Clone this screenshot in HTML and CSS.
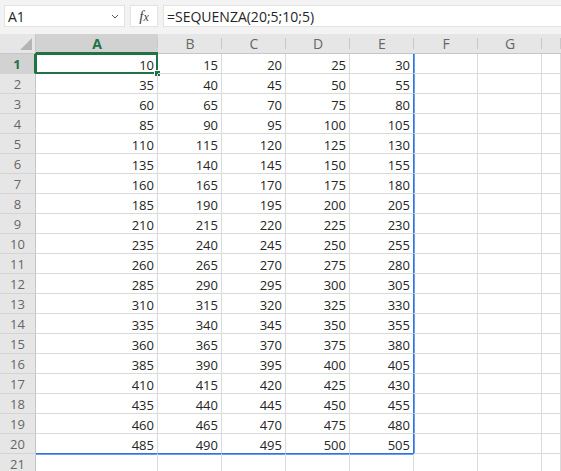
FILE: index.html
```html
<!DOCTYPE html>
<html lang="it">
<head>
    <meta charset="UTF-8">
    <title>Foglio1</title>
    <link rel="stylesheet" href="styles.css">
</head>
<body>
    <!-- Barra della formula -->
    <div class="formula-bar">
        <div class="name-box">
            <span>A1</span>
            <svg class="chevron" width="8" height="5" viewBox="0 0 8 5"><polyline points="1,1 4,4 7,1" fill="none" stroke="#555" stroke-width="1"/></svg>
        </div>
        <div class="fx-box"><i>f</i><i class="sub">x</i></div>
        <div class="formula">=SEQUENZA(20;5;10;5)</div>
    </div>

    <!-- Griglia -->
    <div class="sheet">
        <div class="corner"></div>
        <div class="col-head active">A</div>
        <div class="col-head">B</div>
        <div class="col-head">C</div>
        <div class="col-head">D</div>
        <div class="col-head">E</div>
        <div class="col-head">F</div>
        <div class="col-head">G</div>
        <div class="col-head"></div>

        <div class="row-head active">1</div>
        <div class="cell selected">10</div><div class="cell">15</div><div class="cell">20</div><div class="cell">25</div><div class="cell spill-r">30</div><div class="cell"></div><div class="cell"></div><div class="cell"></div>

        <div class="row-head">2</div>
        <div class="cell">35</div><div class="cell">40</div><div class="cell">45</div><div class="cell">50</div><div class="cell spill-r">55</div><div class="cell"></div><div class="cell"></div><div class="cell"></div>

        <div class="row-head">3</div>
        <div class="cell">60</div><div class="cell">65</div><div class="cell">70</div><div class="cell">75</div><div class="cell spill-r">80</div><div class="cell"></div><div class="cell"></div><div class="cell"></div>

        <div class="row-head">4</div>
        <div class="cell">85</div><div class="cell">90</div><div class="cell">95</div><div class="cell">100</div><div class="cell spill-r">105</div><div class="cell"></div><div class="cell"></div><div class="cell"></div>

        <div class="row-head">5</div>
        <div class="cell">110</div><div class="cell">115</div><div class="cell">120</div><div class="cell">125</div><div class="cell spill-r">130</div><div class="cell"></div><div class="cell"></div><div class="cell"></div>

        <div class="row-head">6</div>
        <div class="cell">135</div><div class="cell">140</div><div class="cell">145</div><div class="cell">150</div><div class="cell spill-r">155</div><div class="cell"></div><div class="cell"></div><div class="cell"></div>

        <div class="row-head">7</div>
        <div class="cell">160</div><div class="cell">165</div><div class="cell">170</div><div class="cell">175</div><div class="cell spill-r">180</div><div class="cell"></div><div class="cell"></div><div class="cell"></div>

        <div class="row-head">8</div>
        <div class="cell">185</div><div class="cell">190</div><div class="cell">195</div><div class="cell">200</div><div class="cell spill-r">205</div><div class="cell"></div><div class="cell"></div><div class="cell"></div>

        <div class="row-head">9</div>
        <div class="cell">210</div><div class="cell">215</div><div class="cell">220</div><div class="cell">225</div><div class="cell spill-r">230</div><div class="cell"></div><div class="cell"></div><div class="cell"></div>

        <div class="row-head">10</div>
        <div class="cell">235</div><div class="cell">240</div><div class="cell">245</div><div class="cell">250</div><div class="cell spill-r">255</div><div class="cell"></div><div class="cell"></div><div class="cell"></div>

        <div class="row-head">11</div>
        <div class="cell">260</div><div class="cell">265</div><div class="cell">270</div><div class="cell">275</div><div class="cell spill-r">280</div><div class="cell"></div><div class="cell"></div><div class="cell"></div>

        <div class="row-head">12</div>
        <div class="cell">285</div><div class="cell">290</div><div class="cell">295</div><div class="cell">300</div><div class="cell spill-r">305</div><div class="cell"></div><div class="cell"></div><div class="cell"></div>

        <div class="row-head">13</div>
        <div class="cell">310</div><div class="cell">315</div><div class="cell">320</div><div class="cell">325</div><div class="cell spill-r">330</div><div class="cell"></div><div class="cell"></div><div class="cell"></div>

        <div class="row-head">14</div>
        <div class="cell">335</div><div class="cell">340</div><div class="cell">345</div><div class="cell">350</div><div class="cell spill-r">355</div><div class="cell"></div><div class="cell"></div><div class="cell"></div>

        <div class="row-head">15</div>
        <div class="cell">360</div><div class="cell">365</div><div class="cell">370</div><div class="cell">375</div><div class="cell spill-r">380</div><div class="cell"></div><div class="cell"></div><div class="cell"></div>

        <div class="row-head">16</div>
        <div class="cell">385</div><div class="cell">390</div><div class="cell">395</div><div class="cell">400</div><div class="cell spill-r">405</div><div class="cell"></div><div class="cell"></div><div class="cell"></div>

        <div class="row-head">17</div>
        <div class="cell">410</div><div class="cell">415</div><div class="cell">420</div><div class="cell">425</div><div class="cell spill-r">430</div><div class="cell"></div><div class="cell"></div><div class="cell"></div>

        <div class="row-head">18</div>
        <div class="cell">435</div><div class="cell">440</div><div class="cell">445</div><div class="cell">450</div><div class="cell spill-r">455</div><div class="cell"></div><div class="cell"></div><div class="cell"></div>

        <div class="row-head">19</div>
        <div class="cell">460</div><div class="cell">465</div><div class="cell">470</div><div class="cell">475</div><div class="cell spill-r">480</div><div class="cell"></div><div class="cell"></div><div class="cell"></div>

        <div class="row-head">20</div>
        <div class="cell spill-b">485</div><div class="cell spill-b">490</div><div class="cell spill-b">495</div><div class="cell spill-b">500</div><div class="cell spill-b spill-r">505</div><div class="cell"></div><div class="cell"></div><div class="cell"></div>

        <div class="row-head">21</div>
        <div class="cell"></div><div class="cell"></div><div class="cell"></div><div class="cell"></div><div class="cell"></div><div class="cell"></div><div class="cell"></div><div class="cell"></div>
    </div>
</body>
</html>
```

FILE: styles.css
```css
body {
    margin: 0;
    background: #fff;
    font-family: "Open Sans", "Noto Sans", sans-serif;
    font-size: 13px;
    color: #262626;
    overflow: hidden;
}

/* barra formula */
.formula-bar {
    display: flex;
    gap: 5px;
    height: 34px;
    padding: 5px 0 0 4px;
    box-sizing: border-box;
    background: #f3f3f3;
}
.name-box, .fx-box, .formula {
    height: 22px;
    background: #fff;
    border: 1px solid #e3e3e3;
    display: flex;
    align-items: center;
    box-sizing: border-box;
}
.name-box {
    width: 121px;
    padding: 0 5px 0 3px;
    justify-content: space-between;
    font-size: 14px;
}
.fx-box {
    width: 28px;
    justify-content: center;
    font-family: "Liberation Serif", serif;
    font-size: 15px;
    color: #444;
}
.fx-box .sub {
    font-size: 12px;
    margin-top: 2px;
}
.formula {
    flex: 1;
    padding-left: 3px;
    border-right: none;
    font-size: 14px;
}

/* griglia */
.sheet {
    display: grid;
    grid-template-columns: 36px 122px repeat(6, 64px) 1fr;
    grid-auto-rows: 20px;
}
.corner {
    background: #e6e6e6;
    position: relative;
    border-bottom: 1px solid #c6c6c6;
    border-right: 1px solid #c6c6c6;
}
.corner::after {
    content: "";
    position: absolute;
    right: 3px;
    bottom: 3px;
    border-style: solid;
    border-width: 0 0 12px 12px;
    border-color: transparent transparent #b4b4b4 transparent;
}
.col-head {
    background: #e6e6e6;
    color: #666;
    font-size: 14px;
    text-align: center;
    line-height: 20px;
    border-bottom: 1px solid #c6c6c6;
    position: relative;
}
.col-head::after {
    content: "";
    position: absolute;
    right: 0;
    top: 4px;
    bottom: 4px;
    border-right: 1px solid #c8c8c8;
}
.col-head.active {
    background: #d2d2d2;
    color: #217346;
    font-weight: bold;
    border-bottom: 2px solid #217346;
}
.row-head {
    background: #e6e6e6;
    color: #666;
    font-size: 13px;
    text-align: center;
    line-height: 20px;
    border-right: 1px solid #c6c6c6;
    border-bottom: 1px solid #d4d4d4;
    box-sizing: border-box;
}
.row-head.active {
    background: #d2d2d2;
    color: #217346;
    font-weight: bold;
    border-right: 2px solid #217346;
}
.cell {
    border-right: 1px solid #dadada;
    border-bottom: 1px solid #dadada;
    box-sizing: border-box;
    text-align: right;
    padding: 2px 3px 0 0;
    line-height: 18px;
    position: relative;
}
.cell.spill-r {
    border-right: 1px solid #2f74e0;
    box-shadow: 1px 0 0 #6d9de6;
}
.cell.spill-b {
    border-bottom: 1px solid #2f74e0;
    box-shadow: 0 1px 0 #6d9de6;
}
.cell.spill-b.spill-r {
    box-shadow: 1px 0 0 #6d9de6, 0 1px 0 #6d9de6;
}
.cell.selected {
    border-color: transparent;
}
.cell.selected::before {
    content: "";
    position: absolute;
    left: -1px;
    top: -1px;
    right: -1px;
    bottom: -1px;
    border: 2px solid #217346;
}
.cell.selected::after {
    content: "";
    position: absolute;
    right: -4px;
    bottom: -4px;
    width: 5px;
    height: 5px;
    background: #217346;
    border: 1px solid #fff;
}
```
